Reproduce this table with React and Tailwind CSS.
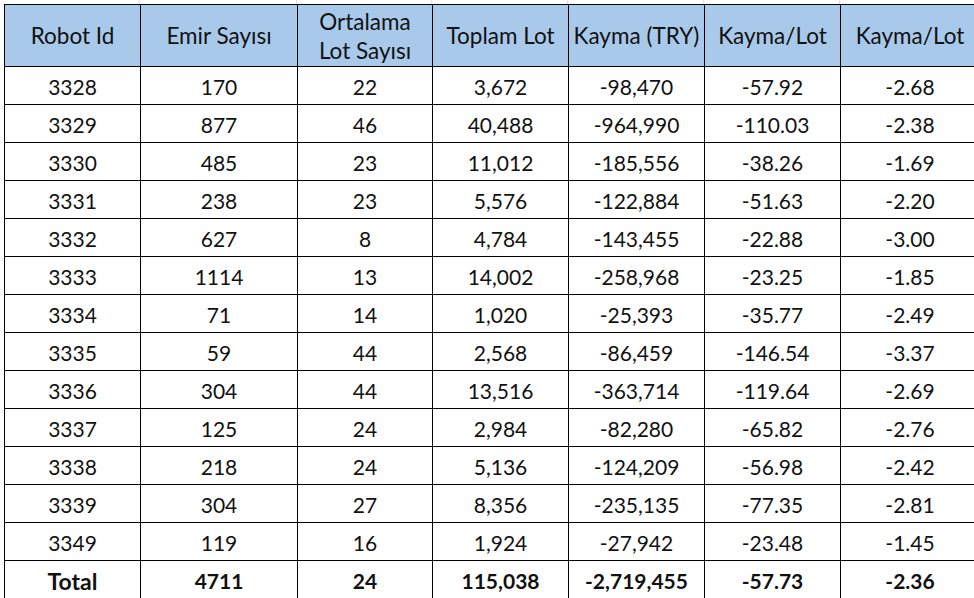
const rows = [
  ['3328', '170', '22', '3,672', '-98,470', '-57.92', '-2.68'],
  ['3329', '877', '46', '40,488', '-964,990', '-110.03', '-2.38'],
  ['3330', '485', '23', '11,012', '-185,556', '-38.26', '-1.69'],
  ['3331', '238', '23', '5,576', '-122,884', '-51.63', '-2.20'],
  ['3332', '627', '8', '4,784', '-143,455', '-22.88', '-3.00'],
  ['3333', '1114', '13', '14,002', '-258,968', '-23.25', '-1.85'],
  ['3334', '71', '14', '1,020', '-25,393', '-35.77', '-2.49'],
  ['3335', '59', '44', '2,568', '-86,459', '-146.54', '-3.37'],
  ['3336', '304', '44', '13,516', '-363,714', '-119.64', '-2.69'],
  ['3337', '125', '24', '2,984', '-82,280', '-65.82', '-2.76'],
  ['3338', '218', '24', '5,136', '-124,209', '-56.98', '-2.42'],
  ['3339', '304', '27', '8,356', '-235,135', '-77.35', '-2.81'],
  ['3349', '119', '16', '1,924', '-27,942', '-23.48', '-1.45'],
];

const total = ['Total', '4711', '24', '115,038', '-2,719,455', '-57.73', '-2.36'];

const widths = ['w-[136px]', 'w-[157px]', 'w-[135px]', 'w-[136px]', 'w-[136px]', 'w-[136px]', 'w-[140px]'];

export default function App() {
  return (
    <div className="w-[974px] h-[598px] overflow-hidden bg-white text-[#111] font-['Lato',sans-serif] text-[21px]">
      {/* faint excel gridlines above the table */}
      <div className="flex h-[4px] pl-[4px]">
        {widths.map((w, i) => (
          <div key={i} className={`${w} shrink-0 border-r border-[#e2e2e2]`}></div>
        ))}
      </div>
      <div className="pl-[4px]">
        <table className="table-fixed border-collapse w-[976px]">
          <thead className="text-[22.5px]">
            <tr className="bg-[#a9c9eb] h-[62px]">
              <th className="w-[136px] border border-black font-normal leading-[26px]">Robot Id</th>
              <th className="w-[157px] border border-black font-normal leading-[26px]">Emir Sayısı</th>
              <th className="w-[135px] border border-black font-normal leading-[29px]">Ortalama<br />Lot Sayısı</th>
              <th className="w-[136px] border border-black font-normal leading-[26px]">Toplam Lot</th>
              <th className="w-[136px] border border-black font-normal leading-[26px]">Kayma (TRY)</th>
              <th className="w-[136px] border border-black font-normal leading-[26px]">Kayma/Lot</th>
              <th className="border border-black font-normal leading-[26px]">Kayma/Lot</th>
            </tr>
          </thead>
          <tbody>
            {rows.map((r) => (
              <tr key={r[0]} className="h-[38px]">
                {r.map((c, i) => (
                  <td key={i} className="border border-black text-center leading-[26px] pt-[2px]">{c}</td>
                ))}
              </tr>
            ))}
            <tr className="h-[38px] font-bold">
              {total.map((c, i) => (
                <td key={i} className={`border border-black text-center leading-[26px] pt-[2px] ${i === 0 ? 'text-[23px]' : ''}`}>{c}</td>
              ))}
            </tr>
          </tbody>
        </table>
      </div>
    </div>
  );
}
